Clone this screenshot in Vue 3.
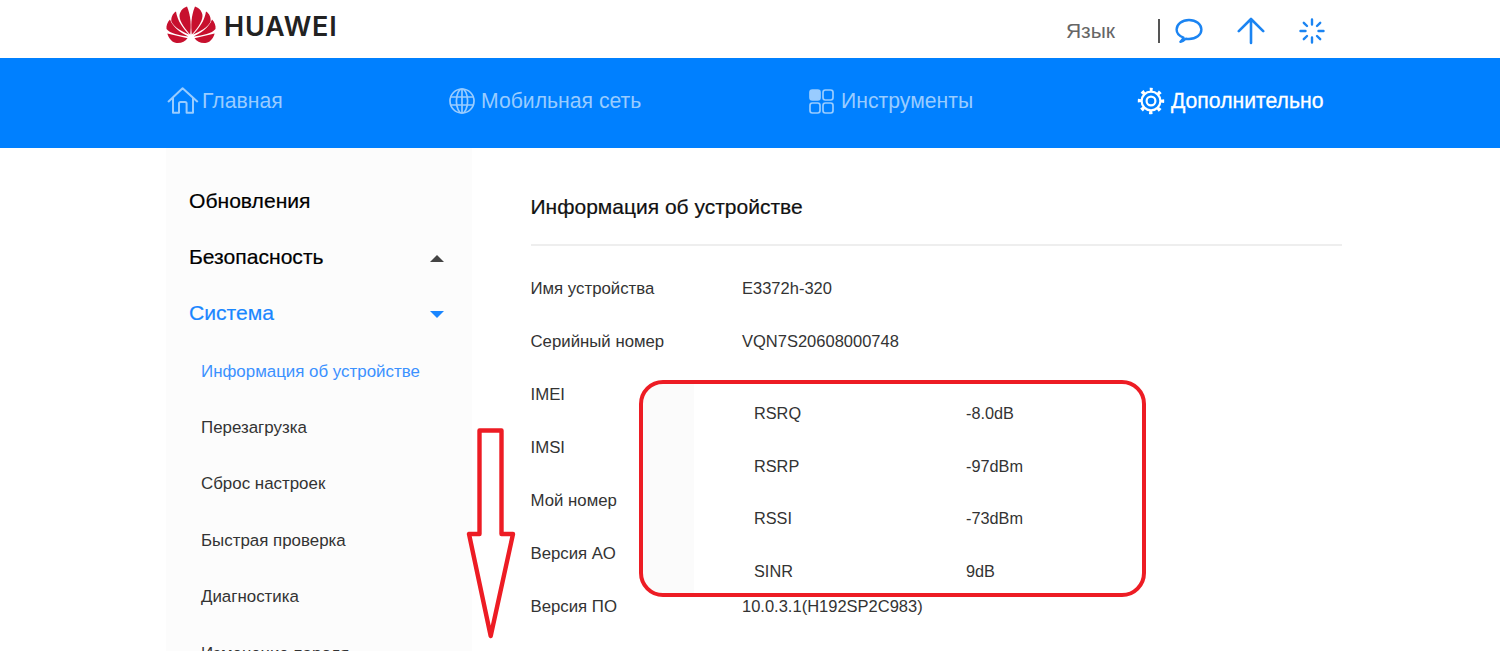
<template>
  <div class="page">
    <header class="top">
      <div class="wrap top-inner">
        <div class="logo">
          <svg class="logo-mark" width="50" height="38" viewBox="0 0 50 38">
            <g fill="#c7102e">
              <g>
                <path d="M25.8 28.5 C24.8 20 25 10 29 0.5 C33.5 2 36.5 6 36.5 10 C36.5 16 30 24 25.8 28.5Z" />
                <path d="M26.9 28.6 C33 22.5 38.5 15 40 5.5 C43.5 7.5 45.2 12 44.6 15.5 C42.5 21 33 26 26.9 28.6Z" />
                <path d="M27.6 30.4 C35 27 43 21.5 46 13.5 C48.5 16 50 20 49.5 23 C46 27.5 37 29.5 27.6 30.4Z" />
                <path d="M28.5 32.2 L48.6 27.4 C47.8 31 45 35.6 40.5 36.8 C35 37.6 31 35.4 28.5 32.2Z" />
              </g>
              <g transform="matrix(-1 0 0 1 50 0)">
                <path d="M25.8 28.5 C24.8 20 25 10 29 0.5 C33.5 2 36.5 6 36.5 10 C36.5 16 30 24 25.8 28.5Z" />
                <path d="M26.9 28.6 C33 22.5 38.5 15 40 5.5 C43.5 7.5 45.2 12 44.6 15.5 C42.5 21 33 26 26.9 28.6Z" />
                <path d="M27.6 30.4 C35 27 43 21.5 46 13.5 C48.5 16 50 20 49.5 23 C46 27.5 37 29.5 27.6 30.4Z" />
                <path d="M28.5 32.2 L48.6 27.4 C47.8 31 45 35.6 40.5 36.8 C35 37.6 31 35.4 28.5 32.2Z" />
              </g>
            </g>
          </svg>
          <span class="logo-text">HUAWEI</span>
        </div>
        <div class="top-right">
          <span class="lang">Язык</span>
          <span class="sep"></span>
          <svg class="tool chat" width="28" height="26" viewBox="0 0 28 26" fill="none" stroke="#1b84f2" stroke-width="2.4" stroke-linejoin="round">
            <path d="M8.5 19.6 C4 18 1.6 15 1.6 11.6 C1.6 6.2 7 2 14 2 C21 2 26.4 6.2 26.4 11.6 C26.4 17 21 21 14 21 C12.8 21 11.8 20.9 10.8 20.7 C9.4 22.2 7.6 23.2 5.4 23.8 C7 22.4 8 21 8.5 19.6Z" />
          </svg>
          <svg class="tool up" width="28" height="28" viewBox="0 0 28 28" fill="none" stroke="#1b84f2" stroke-width="2.6" stroke-linecap="round" stroke-linejoin="round">
            <path d="M14 26 V2.5 M1.8 14.2 L14 2 L26.2 14.2" />
          </svg>
          <svg class="tool spin" width="26" height="26" viewBox="0 0 26 26" fill="none" stroke="#1b84f2" stroke-width="2.4" stroke-linecap="round">
            <path d="M13 1.5 V6.5 M13 19.5 V24.5 M1.5 13 H6.5 M19.5 13 H24.5 M4.8 4.8 L8 8 M18 18 L21.2 21.2 M21.2 4.8 L18 8 M8 18 L4.8 21.2" />
          </svg>
        </div>
      </div>
    </header>

    <nav class="nav">
      <div class="wrap nav-inner">
        <a class="nav-item home">
          <svg width="32" height="28" viewBox="0 0 32 28" fill="none" stroke="currentColor" stroke-width="2" stroke-linejoin="round" stroke-linecap="round">
            <path d="M1.6 14.4 L15.6 1.2 L30.2 14.4 M6 11 V25.8 H12 V16.6 C12 15.4 12.8 15 13.6 15 H18 C18.8 15 19.6 15.4 19.6 16.6 V25.8 H26 V11" />
          </svg>
          <span>Главная</span>
        </a>
        <a class="nav-item mobile">
          <svg width="26" height="26" viewBox="0 0 26 26" fill="none" stroke="currentColor" stroke-width="1.7">
            <circle cx="13" cy="13" r="12" />
            <ellipse cx="13" cy="13" rx="5.6" ry="12" />
            <path d="M13 1 V25 M1.6 9 H24.4 M1.6 17 H24.4" />
          </svg>
          <span>Мобильная сеть</span>
        </a>
        <a class="nav-item tools">
          <svg width="25" height="25" viewBox="0 0 25 25" fill="none" stroke="currentColor" stroke-width="1.7">
            <rect x="1" y="1" width="10" height="10" rx="2.4" fill="currentColor" />
            <rect x="14" y="1" width="10" height="10" rx="2.4" />
            <rect x="1" y="14" width="10" height="10" rx="2.4" />
            <rect x="14" y="14" width="10" height="10" rx="2.4" />
          </svg>
          <span>Инструменты</span>
        </a>
        <a class="nav-item more">
          <svg width="28" height="28" viewBox="0 0 28 28" fill="none" stroke="currentColor">
            <circle cx="14" cy="14" r="4.4" stroke-width="2.2" />
            <circle cx="14" cy="14" r="9.4" stroke-width="2.2" />
            <circle cx="14" cy="14" r="11.5" stroke-width="3.4" stroke-dasharray="3.4 5.63" stroke-dashoffset="1.7" transform="rotate(-90 14 14)" />
          </svg>
          <span>Дополнительно</span>
        </a>
      </div>
    </nav>

    <div class="wrap body">
      <aside class="side">
        <ul class="side-list">
          <li class="side-head">Обновления</li>
          <li class="side-head has-caret">Безопасность<i class="caret caret-up"></i></li>
          <li class="side-head has-caret active">Система<i class="caret caret-down"></i></li>
          <li
            v-for="item in sideItems"
            :key="item"
            class="side-sub"
            :class="{ active: item === currentItem }"
          >
            {{ item }}
          </li>
        </ul>
      </aside>

      <main class="content">
        <h1 class="title">Информация об устройстве</h1>
        <div class="rows">
          <div v-for="row in infoRows" :key="row.label" class="row">
            <span class="row-label">{{ row.label }}</span>
            <span class="row-value">{{ row.value }}</span>
          </div>
        </div>
      </main>
    </div>

    <!-- вставка с сигналом поверх страницы -->
    <div class="signal">
      <div v-for="row in signalRows" :key="row.label" class="signal-row">
        <span class="signal-label">{{ row.label }}</span>
        <span>{{ row.value }}</span>
      </div>
    </div>

    <svg class="arrow" width="50" height="214" viewBox="0 0 50 214" fill="none" stroke="#ed1c24" stroke-width="4.4" stroke-linejoin="round">
      <path d="M13.5 2.5 H35.5 V106 H47 L24.7 208 L3 106 H13.5 Z" />
    </svg>
  </div>
</template>

<script setup>
const currentItem = 'Информация об устройстве';

const sideItems = [
  'Информация об устройстве',
  'Перезагрузка',
  'Сброс настроек',
  'Быстрая проверка',
  'Диагностика',
  'Изменение пароля',
];

const infoRows = [
  { label: 'Имя устройства', value: 'E3372h-320' },
  { label: 'Серийный номер', value: 'VQN7S20608000748' },
  { label: 'IMEI', value: '' },
  { label: 'IMSI', value: '' },
  { label: 'Мой номер', value: '' },
  { label: 'Версия АО', value: '' },
  { label: 'Версия ПО', value: '10.0.3.1(H192SP2C983)' },
];

const signalRows = [
  { label: 'RSRQ', value: '-8.0dB' },
  { label: 'RSRP', value: '-97dBm' },
  { label: 'RSSI', value: '-73dBm' },
  { label: 'SINR', value: '9dB' },
];
</script>

<style>
html,
body {
  margin: 0;
  overflow: hidden;
  background: #fff;
}
</style>

<style scoped>
.page {
  position: relative;
  height: 651px;
  overflow: hidden;
  font-family: "Liberation Sans", Arial, sans-serif;
  color: #333;
}
.wrap {
  width: 1176px;
  margin-left: 166px;
}
.top {
  height: 58px;
}
.top-inner {
  display: flex;
  justify-content: space-between;
  align-items: center;
  height: 58px;
}
.logo {
  display: flex;
  align-items: center;
  margin-top: -8px;
}
.logo-mark {
  display: block;
}
.logo-text {
  margin-left: 8px;
  margin-top: 3px;
  font-family: Inter, "Liberation Sans", sans-serif;
  font-weight: 600;
  font-size: 27px;
  line-height: 30px;
  letter-spacing: 0.8px;
  color: #222;
}
.top-right {
  display: flex;
  align-items: center;
  margin-top: 4px;
  margin-right: 17px;
}
.lang {
  font-size: 21px;
  color: #666;
  margin-right: 43px;
}
.sep {
  width: 2px;
  height: 24px;
  background: #555;
  margin-right: 15px;
}
.tool {
  display: block;
}
.chat {
  margin-right: 34px;
}
.up {
  margin-right: 34px;
}
.nav {
  height: 90px;
  background: #0080ff;
}
.nav-inner {
  display: flex;
  align-items: center;
  height: 86px;
  position: relative;
}
.nav-item {
  display: flex;
  align-items: center;
  gap: 3px;
  font-size: 21.2px;
  color: #99ccff;
}
.home {
  width: 281px;
}
.home svg {
  margin-left: 1px;
}
.mobile {
  width: 360px;
  margin-left: 1px;
}
.mobile svg {
  margin-left: 1px;
  margin-right: 3px;
}
.tools {
  width: 329px;
}
.tools svg {
  margin-left: 1px;
  margin-right: 4px;
}
.more {
  gap: 6px;
  color: #fff;
  -webkit-text-stroke: 0.3px #fff;
}
.body {
  display: flex;
}
.side {
  width: 306px;
  height: 503px;
  flex: none;
  background: #fcfcfc;
}
.side-list {
  list-style: none;
  margin: 0;
  padding: 24.5px 0 0;
}
.side-head {
  position: relative;
  height: 56.4px;
  line-height: 56.4px;
  padding-left: 23px;
  font-size: 21.1px;
  color: #000;
  -webkit-text-stroke: 0.2px currentColor;
}
.side-head.active {
  color: #1a86ff;
}
.side-sub {
  height: 56.4px;
  line-height: 59px;
  padding-left: 35px;
  font-size: 16.9px;
  color: #333;
}
.side-sub.active {
  color: #3b91ff;
}
.caret {
  position: absolute;
  right: 28px;
  top: 26px;
  width: 0;
  height: 0;
  border-left: 7px solid transparent;
  border-right: 7px solid transparent;
}
.caret-up {
  border-bottom: 7px solid #444;
}
.caret-down {
  border-top: 7px solid #1a86ff;
}
.content {
  width: 811.5px;
  margin-left: 58.5px;
}
.title {
  margin: 0;
  height: 98px;
  line-height: 118px;
  box-sizing: border-box;
  border-bottom: 2px solid #eee;
  font-size: 21px;
  font-weight: 400;
  color: #111;
  -webkit-text-stroke: 0.2px #111;
}
.rows {
  padding-top: 16px;
}
.row {
  display: flex;
  height: 53px;
  line-height: 53px;
  font-size: 16.5px;
  color: #333;
}
.row-label {
  width: 211.5px;
  flex: none;
  font-size: 16.8px;
}
.signal {
  position: absolute;
  left: 639px;
  top: 380px;
  width: 507px;
  height: 217px;
  box-sizing: border-box;
  padding: 3px 0 0 111px;
  border: 4px solid #ed1c24;
  border-radius: 24px;
  background: linear-gradient(to right, #fbfbfb 51px, #fff 51px);
  font-size: 16.3px;
  color: #333;
}
.signal-row {
  display: flex;
  height: 52.7px;
  line-height: 52.7px;
}
.signal-label {
  width: 212px;
  flex: none;
}
.arrow {
  position: absolute;
  left: 466px;
  top: 428px;
}
</style>
